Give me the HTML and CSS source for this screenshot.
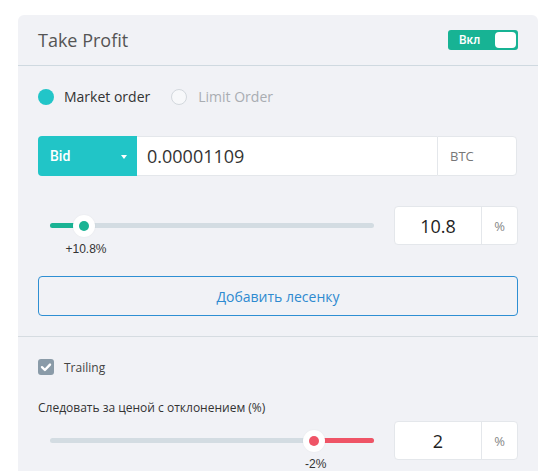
FILE: index.html
```html
<!DOCTYPE html>
<html lang="ru">
<head>
<meta charset="utf-8">
<title>Take Profit</title>
<link rel="stylesheet" href="styles.css">
</head>
<body>
<div class="panel">
  <div class="panel-head">
    <span class="title">Take Profit</span>
    <div class="toggle"><span class="toggle-text">Вкл</span><span class="knob"></span></div>
  </div>

  <div class="section main">
    <div class="radios">
      <label class="radio on"><span class="dot"></span><span class="radio-text">Market order</span></label>
      <label class="radio off"><span class="dot"></span><span class="radio-text">Limit Order</span></label>
    </div>

    <div class="price-row">
      <div class="side-select"><span class="side-text">Bid</span><span class="caret"></span></div>
      <div class="price-input">0.00001109</div>
      <div class="unit">BTC</div>
    </div>

    <div class="slider-row">
      <div class="slider">
        <div class="track">
          <div class="fill green" style="left:0; width:10.5%"></div>
          <div class="thumb" style="left:10.5%"><span class="thumb-dot green"></span><span class="thumb-label">+10.8%</span></div>
        </div>
      </div>
      <div class="num-box"><span class="num">10.8</span><span class="pct">%</span></div>
    </div>

    <button class="ladder">Добавить лесенку</button>
  </div>

  <div class="section trailing">
    <label class="check"><span class="box"><svg viewBox="0 0 16 16" width="16" height="16"><path d="M4 8.2 L6.9 11 L12 5.6" fill="none" stroke="#fff" stroke-width="2.4" stroke-linecap="round" stroke-linejoin="round"/></svg></span><span class="check-text">Trailing</span></label>
    <div class="hint">Следовать за ценой с отклонением (%)</div>
    <div class="slider-row">
      <div class="slider">
        <div class="track">
          <div class="fill red" style="left:81.4%; right:0"></div>
          <div class="thumb" style="left:81.4%"><span class="thumb-dot red"></span><span class="thumb-label">-2%</span></div>
        </div>
      </div>
      <div class="num-box"><span class="num">2</span><span class="pct">%</span></div>
    </div>
  </div>
</div>
</body>
</html>
```

FILE: styles.css
```css
* { box-sizing: border-box; }

html, body {
  margin: 0;
  padding: 0;
  background: #ffffff;
}

body {
  font-family: "Open Sans", "Noto Sans", sans-serif;
  color: #333;
  padding: 15px 0 0 18px;
}

.panel {
  width: 520px;
  background: #f1f2f6;
  border-radius: 6px 6px 0 0;
  padding-bottom: 11px;
}

.panel-head {
  height: 51px;
  display: flex;
  align-items: center;
  justify-content: space-between;
  padding: 0 20px;
  border-bottom: 1px solid #cfd9e0;
}

.title {
  font-size: 18px;
  color: #555;
  line-height: 24px;
  margin-top: -1px;
}

.toggle {
  position: relative;
  width: 70px;
  height: 20px;
  background: #17b394;
  border-radius: 3px;
  display: flex;
  align-items: center;
  padding-left: 11px;
}

.toggle-text {
  font-family: Roboto, "Liberation Sans", sans-serif;
  font-weight: 500;
  font-size: 12px;
  color: #fff;
  line-height: 14px;
}

.knob {
  position: absolute;
  right: 2px;
  top: 2px;
  width: 21px;
  height: 16px;
  background: #fff;
  border-radius: 4px;
}

.section {
  padding: 0 20px;
}

.main {
  padding-top: 20px;
  padding-bottom: 20px;
  border-bottom: 1px solid #d6dce1;
}

.radios {
  display: flex;
  align-items: center;
  height: 21px;
}

.radio {
  display: flex;
  align-items: center;
  font-size: 14px;
}

.radio .dot {
  width: 16px;
  height: 16px;
  border-radius: 50%;
  margin-right: 10px;
}

.radio.on .dot { background: #22c5c8; }
.radio.on .radio-text { color: #333; }

.radio.off { margin-left: 21px; }
.radio.off .dot {
  background: #f7f8fa;
  border: 1px solid #d3d8dd;
  margin-right: 11px;
}
.radio.off .radio-text { color: #a9adb2; }

.price-row {
  display: flex;
  height: 40px;
  margin-top: 29px;
  width: 479px;
}

.side-select {
  width: 99px;
  background: #21c5c7;
  border-radius: 4px 0 0 4px;
  display: flex;
  align-items: center;
  justify-content: space-between;
  padding: 0 10px 0 12px;
}

.side-text {
  font-family: Roboto, "Liberation Sans", sans-serif;
  font-weight: 500;
  font-size: 14px;
  color: #fff;
}

.caret {
  width: 0;
  height: 0;
  border-left: 3.5px solid transparent;
  border-right: 3.5px solid transparent;
  border-top: 4px solid #fff;
  margin-top: 2px;
}

.price-input {
  flex: 1;
  background: #fff;
  border-top: 1px solid #e4e7eb;
  border-bottom: 1px solid #e4e7eb;
  display: flex;
  align-items: center;
  padding-left: 10px;
  font-size: 18px;
  color: #333;
}

.unit {
  width: 80px;
  background: #fff;
  border: 1px solid #e4e7eb;
  border-radius: 0 4px 4px 0;
  display: flex;
  align-items: center;
  padding-left: 12px;
  font-size: 13px;
  color: #777;
}

.slider-row {
  display: flex;
  align-items: center;
  height: 39px;
  margin-top: 30px;
}

.slider {
  flex: 1;
  padding: 0 20px 0 12px;
}

.track {
  position: relative;
  height: 5px;
  border-radius: 3px;
  background: #d3dce2;
}

.fill {
  position: absolute;
  top: 0;
  bottom: 0;
  border-radius: 3px;
}

.fill.green { background: #1ab394; }
.fill.red { background: #ef5466; }

.thumb {
  position: absolute;
  top: 50%;
  width: 22px;
  height: 22px;
  margin: -11px 0 0 -11px;
  border-radius: 50%;
  background: #fff;
  box-shadow: 0 0 2px rgba(0, 0, 0, 0.06);
  display: flex;
  align-items: center;
  justify-content: center;
}

.thumb-dot {
  width: 10px;
  height: 10px;
  border-radius: 50%;
}
.thumb-dot.green { background: #1ab394; }
.thumb-dot.red { background: #ef5466; }

.thumb-label {
  position: absolute;
  top: 27px;
  left: 13px;
  transform: translateX(-50%);
  white-space: nowrap;
  font-family: "Liberation Sans", Arial, sans-serif;
  font-size: 12px;
  line-height: 14px;
  color: #333;
}

.num-box {
  width: 124px;
  height: 39px;
  display: flex;
  background: #fff;
  border: 1px solid #e4e7eb;
  border-radius: 4px;
}

.num {
  width: 87px;
  border-right: 1px solid #e4e7eb;
  display: flex;
  align-items: center;
  justify-content: center;
  font-size: 18px;
  color: #222;
}

.pct {
  flex: 1;
  display: flex;
  align-items: center;
  justify-content: center;
  font-size: 13px;
  color: #888;
}

.ladder {
  display: block;
  width: 480px;
  height: 40px;
  margin-top: 31px;
  background: transparent;
  border: 1px solid #2e8fd3;
  border-radius: 4px;
  font-family: "Open Sans", sans-serif;
  font-size: 14px;
  color: #2e8ad0;
  padding: 0;
}

.trailing {
  padding-top: 22px;
}

.trailing .slider-row {
  margin-top: 5px;
}

.check {
  display: flex;
  align-items: center;
  height: 16px;
}

.box {
  width: 16px;
  height: 16px;
  border-radius: 3px;
  background: #8a9ba8;
  display: flex;
  margin-right: 10px;
}

.check-text {
  font-size: 12px;
  color: #444;
}

.hint {
  margin-top: 24px;
  font-size: 12px;
  line-height: 17px;
  color: #333;
}
```
